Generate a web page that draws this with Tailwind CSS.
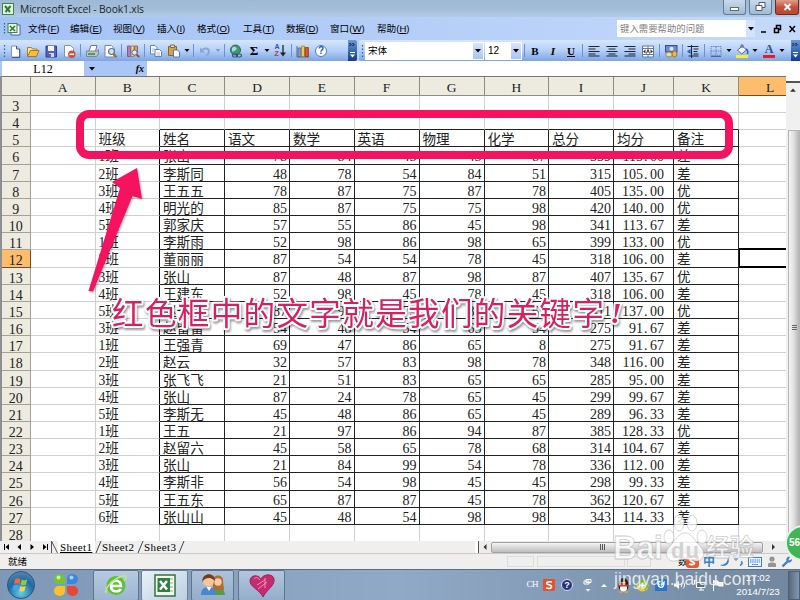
<!DOCTYPE html>
<html lang="zh-CN">
<head>
  <meta charset="UTF-8">
  <meta name="viewport" content="width=device-width, initial-scale=1.0">
  <title>Microsoft Excel - Book1.xls</title>
  <script src="https://cdn.jsdelivr.net/npm/@tailwindcss/browser@4"></script>
</head>
<body class="bg-white">
<div class="relative w-[800px] h-[600px] overflow-hidden flex flex-col font-['Liberation_Sans','Noto_Sans_CJK_SC',sans-serif] text-black">

  <!-- Title bar -->
  <header class="h-[17px] shrink-0 flex items-center pl-[2px] bg-linear-to-b from-[#9db9d3] via-[#a3bdd7] to-[#b3cbe6]">
    <svg class="w-[12px] h-[12px]" viewBox="0 0 12 12"><rect x=".5" y=".5" width="11" height="11" fill="#e6f3e0" stroke="#3e8348"/><path d="M3 3l5 6M8.500 3L3.500 9" stroke="#2c7a37" stroke-width="2"/></svg>
    <h1 class="ml-[6px] text-[10.3px] leading-[16px] text-[#1a2430] font-['Open_Sans',sans-serif] tracking-[-0.12px]">Microsoft Excel - Book1.xls</h1>
    <div class="ml-auto mr-px flex gap-[3px] h-[15px] self-start">
      <div class="w-[23px] border border-t-0 border-[#5f7c99] rounded-b-[3px] bg-linear-to-b from-[#c9d9ea] to-[#a2bad3] flex items-center justify-center pt-[3px]"><div class="w-[9px] h-[4px] bg-white border border-[#5d6b7c]"></div></div>
      <div class="w-[23px] border border-t-0 border-[#5f7c99] rounded-b-[3px] bg-linear-to-b from-[#c9d9ea] to-[#a2bad3] flex items-center justify-center">
        <svg class="w-[11px] h-[10px]" viewBox="0 0 11 10" fill="#fff" stroke="#4c5a6c"><path d="M4 .5h6v5H4z"/><path d="M1 3.500h6v5H1z"/></svg>
      </div>
      <div class="w-[24px] border border-t-0 border-[#6d2a23] rounded-b-[3px] bg-linear-to-b from-[#df9c8f] via-[#c7503c] to-[#bd4631] flex items-center justify-center">
        <svg class="w-[9px] h-[8px]" viewBox="0 0 9 8"><path d="M1.500 1l6 6M7.500 1l-6 6" stroke="#fff" stroke-width="2"/></svg>
      </div>
    </div>
  </header>

  <!-- Menu bar -->
  <nav class="h-[23px] shrink-0 flex items-center bg-linear-to-r from-[#a3c2f5] to-[#c5dafa] text-[9.6px] leading-[20px] whitespace-nowrap">
    <svg class="w-[20px] h-[14px] ml-[2px]" viewBox="0 0 20 14"><path d="M2.500 1v12" stroke="#365a9c" stroke-width="1.200" stroke-dasharray="1.500 1.500"/><path d="M9 3h9v10H9z" fill="#fff" stroke="#3667a8"/><rect x="6" y="1.500" width="9" height="9" fill="#e3f2df" stroke="#3e8348"/><path d="M8 4l5 5M13 4L8 9" stroke="#2c7a37" stroke-width="1.500"/></svg>
    <div class="ml-[6px] w-[42px]">文件(<u>F</u>)</div>
    <div class="w-[43px]">编辑(<u>E</u>)</div>
    <div class="w-[44px]">视图(<u>V</u>)</div>
    <div class="w-[40px]">插入(<u>I</u>)</div>
    <div class="w-[46px]">格式(<u>O</u>)</div>
    <div class="w-[43px]">工具(<u>T</u>)</div>
    <div class="w-[44px]">数据(<u>D</u>)</div>
    <div class="w-[47px]">窗口(<u>W</u>)</div>
    <div class="w-[40px]">帮助(<u>H</u>)</div>
    <div class="ml-auto w-[138px] h-[17px] bg-white flex items-center text-[#808080] text-[9.4px]">
      <span class="pl-[3px]">键入需要帮助的问题</span>
      <div class="ml-auto w-[9px] h-[17px] bg-[#d3e3fb] flex items-center justify-center"><svg class="w-[6px] h-[4px]" viewBox="0 0 6 4"><path d="M0 0h6L3 3.500z"/></svg></div>
    </div>
    <svg class="w-[45px] h-[12px]" viewBox="0 0 45 12" fill="none" stroke="#000" stroke-width="1.500"><path d="M6 9h5M19.500 5.500h4v4h-4zM21.500 5V2.500h4v4H24M34.500 3l5.500 6M40 3l-5.500 6"/></svg>
  </nav>

  <!-- Toolbars -->
  <div class="h-[21px] shrink-0 flex bg-[#b8d0f7]">
    <div class="w-[357px] h-[21px] flex items-center pl-[2px] bg-linear-to-b from-[#d6e6fe] via-[#b4cff8] to-[#7ea5e2] rounded-r-[2px]">
      <svg class="w-[4px] h-[14px] shrink-0" viewBox="0 0 4 14"><path d="M2.500 1v12" stroke="#365a9c" stroke-width="1.200" stroke-dasharray="1.500 2"/></svg>
      <!-- new -->
      <svg class="w-[18px] h-[18px] shrink-0" viewBox="0 0 18 18"><path d="M5.500 4h5l3 3v8h-8z" fill="#fff" stroke="#8494b4"/><path d="M10.500 4v3h3M13.800 7v8.500H6" fill="none" stroke="#3d5588"/></svg>
      <!-- open -->
      <svg class="w-[18px] h-[18px] shrink-0" viewBox="0 0 18 18"><path d="M3.500 14V5.500h4l1 1.500H13v3" fill="#fbe28d" stroke="#ab8124"/><path d="M3.500 14.500l3-6H15l-2.500 6z" fill="#f4bd43" stroke="#a8791e"/></svg>
      <!-- save -->
      <svg class="w-[18px] h-[18px] shrink-0" viewBox="0 0 18 18"><path d="M4 4h10.500v11H4z" fill="#5661ba" stroke="#353c8c"/><path d="M6 4h6v5H6z" fill="#f3f5ff"/><path d="M7 11h5v4H7z" fill="#cfd3ec"/><path d="M8 12v3" stroke="#353c8c" stroke-width="1.500"/></svg>
      <!-- permission -->
      <svg class="w-[18px] h-[18px] shrink-0" viewBox="0 0 18 18"><path d="M4.500 3.500h6l3 3v8.500h-9z" fill="#fff" stroke="#8492ad"/><circle cx="11.800" cy="12.300" r="3.700" fill="#d44c31"/><path d="M9.500 12.300h4.600" stroke="#fff" stroke-width="1.600"/></svg>
      <div class="w-[5px] h-[13px] shrink-0 flex justify-center"><div class="w-px bg-[#6b92cf]"></div></div>
      <!-- print -->
      <svg class="w-[18px] h-[18px] shrink-0" viewBox="0 0 18 18"><path d="M6 9l2-5.500h6L12.500 9" fill="#fff" stroke="#69768b"/><path d="M3.500 9h11l1-1.500V12l-2 2.500h-10z" fill="#b9c2cb" stroke="#7b8794"/><path d="M5 12h7" stroke="#4f9d57" stroke-width="2"/></svg>
      <!-- preview -->
      <svg class="w-[18px] h-[18px] shrink-0" viewBox="0 0 18 18"><path d="M4 3.500h6.500l2.500 3v8.500H4z" fill="#fff" stroke="#7586a5"/><circle cx="10.500" cy="9.500" r="3" fill="#cfe3f8" stroke="#626e80" stroke-width="1.200"/><path d="M12.500 12l3 3.200" stroke="#a46834" stroke-width="2"/></svg>
      <div class="w-[5px] h-[13px] shrink-0 flex justify-center"><div class="w-px bg-[#6b92cf]"></div></div>
      <!-- research -->
      <svg class="w-[18px] h-[18px] shrink-0" viewBox="0 0 18 18"><path d="M3.500 4h3v10.500h-3z" fill="#a97fbb" stroke="#7d5c91"/><path d="M7 4h3v10.500H7z" fill="#e9d79b" stroke="#9c8b5a"/><path d="M10.500 4h3v7h-3z" fill="#d99a7c" stroke="#986650"/><circle cx="10.500" cy="10.500" r="2.600" fill="#dbeafb" stroke="#626e80"/><path d="M12.500 12.500l2.700 2.700" stroke="#8a5630" stroke-width="1.800"/></svg>
      <div class="w-[5px] h-[13px] shrink-0 flex justify-center"><div class="w-px bg-[#6b92cf]"></div></div>
      <!-- copy -->
      <svg class="w-[18px] h-[18px] shrink-0" viewBox="0 0 18 18" fill="#fff" stroke="#5f82bd"><path d="M3.500 3.500h4.500l2 2v6.500H3.500z"/><path d="M8 7.500h4.500l2 2v5H8z"/><path d="M5 7h3M5 9h2M9.500 11h3.500M9.500 13h3.500" stroke="#84a5d8" stroke-width=".8"/></svg>
      <!-- paste -->
      <svg class="w-[18px] h-[18px] shrink-0" viewBox="0 0 18 18"><path d="M3.500 4.500h8v9h-8z" fill="#d9a24a" stroke="#8d6224"/><path d="M5.500 3h4v2.500h-4z" fill="#e8e0c2" stroke="#7c6c44"/><path d="M8.500 8h4l2 2v5h-6z" fill="#fff" stroke="#5475ad"/></svg>
      <svg class="w-[8px] h-[4px] shrink-0" viewBox="0 0 8 4"><path d="M1.500 0h5L4 3z"/></svg>
      <div class="w-[5px] h-[13px] shrink-0 flex justify-center"><div class="w-px bg-[#6b92cf]"></div></div>
      <!-- undo -->
      <svg class="w-[18px] h-[18px] shrink-0" viewBox="0 0 18 18"><path d="M5 9c3-4 8-3 8 .5 0 2-1 3-2.500 4.500" fill="none" stroke="#8aa6d6" stroke-width="2"/><path d="M4 5.500v5h5z" fill="#8aa6d6"/></svg>
      <svg class="w-[8px] h-[4px] shrink-0" viewBox="0 0 8 4"><path d="M1.500 0h5L4 3z" fill="#7f9bcb"/></svg>
      <div class="w-[5px] h-[13px] shrink-0 flex justify-center"><div class="w-px bg-[#6b92cf]"></div></div>
      <!-- hyperlink -->
      <svg class="w-[18px] h-[18px] shrink-0" viewBox="0 0 18 18"><circle cx="8.500" cy="8" r="5" fill="#3f9a66" stroke="#2a6b55"/><path d="M5 6c2-2 3-1 4-.5s1 2-1 3-2 2-3 .5z" fill="#a6d8f2"/><rect x="5.500" y="12" width="5" height="3" rx="1.500" fill="none" stroke="#35507f" stroke-width="1.200"/><rect x="9.500" y="12" width="5" height="3" rx="1.500" fill="none" stroke="#35507f" stroke-width="1.200"/></svg>
      <div class="w-[18px] shrink-0 text-center text-[13px] leading-[16px] font-bold font-['Liberation_Serif',serif]">Σ</div>
      <svg class="w-[8px] h-[4px] shrink-0" viewBox="0 0 8 4"><path d="M1.500 0h5L4 3z"/></svg>
      <!-- sort -->
      <div class="w-[18px] shrink-0 flex items-center justify-center">
        <div class="text-[7px] leading-[6.500px] font-bold"><div class="text-[#2c51b6]">A</div><div class="text-[#b33a40]">Z</div></div>
        <svg class="w-[6px] h-[13px]" viewBox="0 0 6 13"><path d="M3 1v8" stroke="#222" stroke-width="1.300"/><path d="M0 8.500h6L3 12.500z" fill="#222"/></svg>
      </div>
      <div class="w-[5px] h-[13px] shrink-0 flex justify-center"><div class="w-px bg-[#6b92cf]"></div></div>
      <!-- chart -->
      <svg class="w-[18px] h-[18px] shrink-0" viewBox="0 0 18 18"><path d="M3 4v11h12" fill="none" stroke="#5a6b86"/><path d="M4 6h3v8.500H4z" fill="#7c9fcf" stroke="#466394" stroke-width=".7"/><path d="M7.500 4h3v10.500h-3z" fill="#f1c84f" stroke="#a27b21" stroke-width=".7"/><path d="M11 5.500h3.500v9H11z" fill="#d4582f" stroke="#8a331a" stroke-width=".7"/></svg>
      <!-- help -->
      <div class="w-[18px] shrink-0 flex justify-center"><div class="size-[12px] rounded-full bg-white border border-[#4b78c4] text-[#2458bb] text-[10px] leading-[10.500px] font-bold text-center">?</div></div>
      <div class="ml-auto w-[9px] h-[21px] shrink-0 rounded-r-[2px] bg-linear-to-b from-[#6b97dd] to-[#0f3c91] flex flex-col items-center justify-between py-[3px]">
        <svg class="w-[7px] h-[4px]" viewBox="0 0 7 4"><path d="M.5 0l1.500 1.500L.5 3M3.500 0L5 1.500 3.500 3" stroke="#000" fill="none"/></svg>
        <svg class="w-[7px] h-[6px]" viewBox="0 0 7 6"><path d="M1 .5h5" stroke="#fff"/><path d="M1 2.500h5L3.500 5.500z" fill="#fff"/></svg>
      </div>
    </div>

    <div class="w-[441px] ml-[2px] h-[21px] flex items-center pl-[1px] bg-linear-to-b from-[#d6e6fe] via-[#b4cff8] to-[#7ea5e2] rounded-l-[2px]">
      <svg class="w-[5px] h-[14px] shrink-0" viewBox="0 0 5 14"><path d="M2.500 1v12" stroke="#365a9c" stroke-width="1.200" stroke-dasharray="1.500 2"/></svg>
      <div class="w-[119px] h-[18px] shrink-0 bg-white flex items-center text-[9.600px] pl-[3px] leading-[16px]">宋体<div class="ml-auto w-[10px] h-[16px] mr-px bg-linear-to-b from-[#d5e5fd] to-[#a6c5f3] flex items-center justify-center"><svg class="w-[6px] h-[4px]" viewBox="0 0 6 4"><path d="M0 0h6L3 3.500z"/></svg></div></div>
      <div class="w-[37px] h-[18px] ml-[1px] shrink-0 bg-white flex items-center text-[10px] pl-[3px] leading-[16px]">12<div class="ml-auto w-[10px] h-[16px] mr-px bg-linear-to-b from-[#d5e5fd] to-[#a6c5f3] flex items-center justify-center"><svg class="w-[6px] h-[4px]" viewBox="0 0 6 4"><path d="M0 0h6L3 3.500z"/></svg></div></div>
      <div class="w-[4px] h-[13px] shrink-0 flex justify-center"><div class="w-px bg-[#6b92cf]"></div></div>
      <div class="w-[18px] shrink-0 text-center text-[11px] leading-[16px] font-bold font-['Liberation_Serif',serif]">B</div>
      <div class="w-[18px] shrink-0 text-center text-[11px] leading-[16px] font-bold italic font-['Liberation_Serif',serif]">I</div>
      <div class="w-[18px] shrink-0 text-center text-[11px] leading-[16px] font-bold underline font-['Liberation_Serif',serif]">U</div>
      <div class="w-[5px] h-[13px] shrink-0 flex justify-center"><div class="w-px bg-[#6b92cf]"></div></div>
      <svg class="w-[18px] h-[18px] shrink-0" viewBox="0 0 18 18" stroke="#1c2634" stroke-width="1.200"><path d="M3.500 4.500h11M3.500 7h7M3.500 9.500h11M3.500 12h7M3.500 14h11"/></svg>
      <svg class="w-[18px] h-[18px] shrink-0" viewBox="0 0 18 18" stroke="#1c2634" stroke-width="1.200"><path d="M3.500 4.500h11M5.500 7h7M3.500 9.500h11M5.500 12h7M3.500 14h11"/></svg>
      <svg class="w-[18px] h-[18px] shrink-0" viewBox="0 0 18 18" stroke="#1c2634" stroke-width="1.200"><path d="M3.500 4.500h11M7.500 7h7M3.500 9.500h11M7.500 12h7M3.500 14h11"/></svg>
      <svg class="w-[18px] h-[18px] shrink-0" viewBox="0 0 18 18"><path d="M3.500 4h11v11h-11zM3.500 6.500h11M3.500 12.500h11M9 4v2.500M9 12.500V15" fill="#fff" stroke="#64789b"/><path d="M4 9.500l2.500-2v4zM14 9.500l-2.500-2v4z" fill="#333"/><path d="M7.500 11.500L9 7.500l1.500 4" fill="none" stroke="#333"/></svg>
      <div class="w-[5px] h-[13px] shrink-0 flex justify-center"><div class="w-px bg-[#6b92cf]"></div></div>
      <svg class="w-[18px] h-[18px] shrink-0" viewBox="0 0 18 18"><rect x="3.500" y="3.500" width="11.500" height="6.500" fill="#6d8fd1" stroke="#324f8e"/><circle cx="9.500" cy="6.700" r="2" fill="#dbe7fb"/><ellipse cx="7" cy="12.500" rx="3.300" ry="2.500" fill="#e3dba5" stroke="#867a3b" stroke-width=".8"/><ellipse cx="12.500" cy="12" rx="2.500" ry="3" fill="#eeb541" stroke="#93671b" stroke-width=".8"/></svg>
      <div class="w-[4px] h-[13px] shrink-0 flex justify-center"><div class="w-px bg-[#6b92cf]"></div></div>
      <svg class="w-[18px] h-[18px] shrink-0" viewBox="0 0 18 18" stroke="#1c2634" stroke-width="1.100"><path d="M3.500 4.500h11M9.500 7h5M9.500 9.500h4M9.500 12h5M4.500 14h10M7.500 3v13"/><path d="M3 9.500l3.500-2.500v5z" fill="#2c57b4" stroke="none"/></svg>
      <div class="w-[5px] h-[13px] shrink-0 flex justify-center"><div class="w-px bg-[#6b92cf]"></div></div>
      <svg class="w-[18px] h-[18px] shrink-0" viewBox="0 0 18 18" fill="none" stroke="#6c88b8"><path d="M4 4.500h10v9H4zM9 4.500v9M4 9h10" stroke-dasharray="1.500 .7"/><path d="M4 14.500h10" stroke="#4b6597"/></svg>
      <svg class="w-[8px] h-[4px] shrink-0" viewBox="0 0 8 4"><path d="M1.500 0h5L4 3z"/></svg>
      <svg class="w-[18px] h-[18px] shrink-0" viewBox="0 0 18 18"><path d="M4.500 8l5-4 4 4-5 4z" fill="#eef3fb" stroke="#5a6780"/><path d="M8 6V3h2v3" fill="none" stroke="#5a6780"/><path d="M13 7c2 1 2 3 1.500 5" stroke="#2f62b7" stroke-width="1.600" fill="none"/><path d="M3 13h12v3H3z" fill="#f6ee35"/></svg>
      <svg class="w-[8px] h-[4px] shrink-0" viewBox="0 0 8 4"><path d="M1.500 0h5L4 3z"/></svg>
      <div class="w-[18px] h-[14px] ml-px shrink-0 flex flex-col items-center"><div class="text-[12px] leading-[11px] font-bold text-[#2f4b8e] font-['Liberation_Serif',serif]">A</div><div class="w-[12px] h-[3px] bg-[#d8232e]"></div></div>
      <svg class="w-[8px] h-[4px] shrink-0" viewBox="0 0 8 4"><path d="M1.500 0h5L4 3z"/></svg>
      <div class="ml-auto w-[9px] h-[21px] shrink-0 bg-linear-to-b from-[#6b97dd] to-[#0f3c91] flex flex-col items-center justify-between py-[3px]">
        <svg class="w-[7px] h-[4px]" viewBox="0 0 7 4"><path d="M.5 0l1.500 1.500L.5 3M3.500 0L5 1.500 3.500 3" stroke="#000" fill="none"/></svg>
        <svg class="w-[7px] h-[6px]" viewBox="0 0 7 6"><path d="M1 .5h5" stroke="#fff"/><path d="M1 2.500h5L3.500 5.500z" fill="#fff"/></svg>
      </div>
    </div>
  </div>

  <!-- Formula bar -->
  <div class="h-[15px] shrink-0 flex bg-[#a9c6f6] pl-[2px] font-['Liberation_Serif',serif]">
    <div class="w-[82px] bg-white text-center text-[12px] leading-[17px]">L12</div>
    <div class="w-[63px] flex items-center justify-between pl-[5px] pr-[3px]">
      <svg class="w-[6px] h-[4px]" viewBox="0 0 6 4"><path d="M0 0h6L3 3.500z"/></svg>
      <span class="italic font-bold text-[10px] leading-[14px]">fx</span>
    </div>
    <div class="flex-1 bg-white"></div>
  </div>

  <!-- Worksheet -->
  <main class="h-[465px] shrink-0 flex overflow-hidden">
    <div class="w-[2px] shrink-0 bg-[#8f8f8f]"></div>
    <div id="sheet" class="w-[784px] shrink-0 overflow-hidden border-t border-[#77776f]"></div>
    <div class="w-[14px] shrink-0 flex flex-col items-center bg-[#f0f0f0]">
      <div class="w-full h-[7px] border-b-2 border-[#555] bg-white"></div>
      <svg class="w-[8px] h-[5px] mt-[5px]" viewBox="0 0 8 5"><path d="M1 4h6L4 .5z" fill="#333"/></svg>
      <div class="w-[12px] h-[420px] mt-[37px] ml-[2px] border border-[#b5b5b5] bg-linear-to-r from-[#f5f5f5] via-[#dedede] to-[#b5b5b5] flex flex-col items-center gap-px pt-[194px]">
        <div class="w-[5px] h-px bg-[#666]"></div><div class="w-[5px] h-px bg-[#666]"></div><div class="w-[5px] h-px bg-[#666]"></div>
      </div>
    </div>
  </main>

  <!-- Sheet tabs -->
  <div class="h-[13px] shrink-0 flex items-center bg-[#efefef] border-b border-[#c9c9c9] font-['Liberation_Serif',serif] text-[11px] leading-[12px]">
    <svg class="w-[50px] h-[12px] shrink-0" viewBox="0 0 50 12"><path d="M4.500 3v6" stroke="#000"/><path d="M9 3v6L5.500 6zM21 3v6l-3.500-3zM30.500 3v6l3.500-3zM43 3v6l3.500-3z"/><path d="M47.500 3v6" stroke="#000"/></svg>
    <svg class="w-[8px] h-[12px] shrink-0" viewBox="0 0 8 12"><path d="M1.500 0v12M1.500 0L7.500 12" stroke="#555" fill="none"/></svg>
    <b class="w-[37px] h-[12px] bg-white pl-[2px] underline font-normal tracking-[0.4px]">Sheet1</b>
    <svg class="w-[7px] h-[12px] shrink-0" viewBox="0 0 7 12"><path d="M1 12L6 0" stroke="#444"/></svg>
    <span class="w-[35px] tracking-[0.4px]">Sheet2</span>
    <svg class="w-[7px] h-[12px] shrink-0" viewBox="0 0 7 12"><path d="M1 12L6 0" stroke="#444"/></svg>
    <span class="w-[34px] tracking-[0.4px]">Sheet3</span>
    <svg class="w-[7px] h-[12px] shrink-0" viewBox="0 0 7 12"><path d="M1 12L6 0" stroke="#444"/></svg>
    <div class="ml-auto w-[325px] h-[12px] flex items-center bg-[#ececec]">
      <div class="w-[4px] h-[12px] border-r border-[#555] bg-white"></div>
      <svg class="w-[12px] h-[8px]" viewBox="0 0 12 8"><path d="M7.500 1v6L4.500 4z" fill="#333"/></svg>
      <div class="w-[272px] h-[11px] border border-[#a2a2a2] rounded-[2px] bg-linear-to-b from-[#f4f4f4] to-[#bebebe] flex items-center pl-[108px] gap-px">
        <div class="w-px h-[6px] bg-[#555]"></div><div class="w-px h-[6px] bg-[#555]"></div><div class="w-px h-[6px] bg-[#555]"></div>
      </div>
      <svg class="w-[10px] h-[8px] ml-[5px]" viewBox="0 0 10 8"><path d="M4 1v6l3-3z" fill="#333"/></svg>
    </div>
  </div>

  <!-- Status bar -->
  <div class="h-[15px] shrink-0 flex items-center bg-[#f0efee] text-[9.500px] leading-[14px]">
    <span class="pl-[8px] w-[507px]">就绪</span>
    <div class="w-[27px] h-[11px] border border-[#dcdcdc]"></div>
    <div class="w-[88px] h-[11px] ml-[3px] border border-[#dcdcdc]"></div>
    <div class="w-[24px] h-[11px] ml-[2px] border border-[#dcdcdc]"></div>
    <span class="ml-[27px] w-[8px] whitespace-nowrap">数</span>
    <!-- input method bar -->
    <div class="flex items-center gap-[4px] text-[#3c7fc5]">
      <svg class="w-[13px] h-[13px]" viewBox="0 0 13 13"><rect width="13" height="13" rx="3" fill="#e45a32"/><path d="M10 3.500C5 2 3 4 4.500 5.500S9 7 8.500 8.500 4 9.500 3 9" fill="none" stroke="#fff" stroke-width="1.800"/></svg>
      <span class="text-[12px] font-bold">中</span>
      <svg class="w-[11px] h-[11px]" viewBox="0 0 11 11"><path d="M9 1c3 7-3 11-8 8 5 0 8-3 8-8z" fill="#3c7fc5"/></svg>
      <svg class="w-[10px] h-[11px]" viewBox="0 0 10 11"><circle cx="2" cy="3" r="1.200" fill="none" stroke="#3c7fc5"/><path d="M7 5.500c2 1 1 3-1 4" stroke="#3c7fc5" stroke-width="1.600" fill="none"/></svg>
      <svg class="w-[14px] h-[10px]" viewBox="0 0 14 10"><rect x=".5" y=".5" width="13" height="9" fill="#eaf4ff" stroke="#3c7fc5"/><path d="M2 3h10M2 5h10M4 7.500h6" stroke="#3c7fc5" stroke-width="1.200" stroke-dasharray="1.500 .7"/></svg>
      <svg class="w-[10px] h-[12px] ml-px" viewBox="0 0 10 12" fill="#959595"><circle cx="5" cy="3" r="2.600"/><path d="M1 11V8c0-2 8-2 8 0v3z"/></svg>
      <svg class="w-[12px] h-[12px]" viewBox="0 0 12 12"><path d="M1.500 10.500l5-5" stroke="#3c7fc5" stroke-width="2.400"/><path d="M11 3L8.500 4.500 7.500 3.500 9 1C6 0 4.500 3 6 5.500S11.500 6 11 3z" fill="#3c7fc5"/></svg>
    </div>
  </div>

  <!-- Taskbar -->
  <footer class="h-[31px] shrink-0 flex items-center border-t border-[#5b6e84] bg-linear-to-r from-[#7f98b6] via-[#90a9c6] to-[#71879f]">
    <svg class="w-[28px] h-[28px] ml-[7px] shrink-0" viewBox="0 0 28 28"><defs><radialGradient id="orb" cx=".5" cy=".8" r=".8"><stop offset="0" stop-color="#5fd0ee"/><stop offset=".6" stop-color="#1e6aa5"/><stop offset="1" stop-color="#5c87ad"/></radialGradient></defs><circle cx="14" cy="14" r="13.500" fill="url(#orb)" stroke="#2a577f"/><path d="M8 8c2-1 3-1 5.500 0L12.500 13c-2-1-3.500-1-5.500 0z" fill="#ef6a36"/><path d="M14.800 8.500c2 1 3 1 5.500 0L19 13.500c-2 1-3.500 1-5.500 0z" fill="#91c940"/><path d="M6.500 14.500c2-1 3.500-1 5.500 0l-1 5c-2-1-3.500-1-5.500 0z" fill="#48a2e3"/><path d="M13.200 15c2 1 3.500 1 5.500 0l-1.200 5c-2 1-3 1-5.300 0z" fill="#fbd042"/></svg>
    <svg class="w-[26px] h-[26px] ml-[18px] shrink-0" viewBox="0 0 26 26"><path d="M1 7c0-7 11-6 11 0v5H6C3 12 1 10 1 7z" fill="#72c535"/><path d="M14 7c0-7 11-6 11 0 0 3-2 5-5 5h-6z" fill="#3d86df"/><path d="M1 19c0-3 2-5 5-5h6v5c0 7-11 6-11 0z" fill="#f7c22c"/><path d="M14 14h6c3 0 5 2 5 5 0 7-11 6-11 0z" fill="#e5473b"/><circle cx="5.500" cy="5.500" r="2" fill="#d0f09a"/><circle cx="18.500" cy="5.500" r="2" fill="#a5d0fa"/></svg>
    <div class="w-[46px] h-[31px] ml-[14px] shrink-0 border border-[#60758d] bg-linear-to-b from-[#b7cae0] to-[#9db5d1] rounded-[2px] flex items-center justify-center">
      <svg class="w-[24px] h-[24px]" viewBox="0 0 24 24"><circle cx="12" cy="12.500" r="9.500" fill="#5fbf35"/><path d="M7 13h10c0-7-10-7-10 0s8 6 10 3" fill="none" stroke="#fff" stroke-width="2.600"/><path d="M2 20C0 14 14 2 22 3c1 2-1 4-2 5" fill="none" stroke="#b7e98c" stroke-width="1.600"/></svg>
    </div>
    <div class="w-[47px] h-[31px] ml-[2px] shrink-0 border border-[#6c8096] bg-linear-to-br from-[#eaf1f8] to-[#bccfe3] rounded-[2px] flex items-center justify-center">
      <svg class="w-[22px] h-[23px]" viewBox="0 0 22 23"><rect x="1" y="1" width="20" height="21" fill="#f4faf1" stroke="#317439" stroke-width="1.500"/><path d="M13 5h6M13 9h6M13 13h6M13 17h6" stroke="#7fb384"/><rect x="3.500" y="4" width="12.500" height="14" fill="#2c823c"/><path d="M6 7l7 8.500M13 7l-7 8.500" stroke="#fff" stroke-width="2.500"/></svg>
    </div>
    <div class="w-[43px] h-[31px] ml-[3px] shrink-0 border border-[#60758d] bg-linear-to-b from-[#adc2da] to-[#94adca] rounded-[2px] flex items-center justify-center">
      <svg class="w-[26px] h-[24px]" viewBox="0 0 26 24"><path d="M13 22c-1-8 3-8 5-8s6 0 7 8z" fill="#5b9b48"/><path d="M13 17V7c0-6 10-6 10 0 0 4 1 7 1 10z" fill="#b06c33"/><circle cx="18" cy="9" r="3.700" fill="#f5cda3"/><path d="M1 22c0-6 3-8 7.500-8S16 16 16 22z" fill="#4888cc"/><path d="M6.500 14l2.500 4 2.500-4z" fill="#fff"/><circle cx="8.500" cy="8" r="5.500" fill="#f4c79b"/><path d="M2.500 9C1 0 15-2 15 8c-2-2-4-3-6-3-3 0-5 1-6.500 4z" fill="#79371d"/></svg>
    </div>
    <div class="w-[47px] h-[31px] ml-[4px] shrink-0 border border-[#60758d] bg-linear-to-b from-[#b3c6dd] to-[#94adca] rounded-[2px] flex items-center justify-center">
      <svg class="w-[26px] h-[25px]" viewBox="0 0 26 25"><path d="M14 24C11 17 1 14 1 8c0-6 8-7 11-2 2-5 12-6 13 0 1 7-7 10-11 18z" fill="#c82a70" stroke="#9d2259"/><path d="M5 6c1-2 4-2 6 1M8 12l8-5M9 16l9-7M16 5v10" stroke="#f292bb" fill="none"/></svg>
    </div>

    <!-- tray -->
    <div class="ml-auto flex items-center text-white">
      <span class="w-[16px] mr-[5px] text-right text-[9px] tracking-tighter font-['Liberation_Serif',serif]">CH</span>
      <svg class="w-[12px] h-[12px]" viewBox="0 0 12 12"><rect width="12" height="12" rx="1" fill="#e2532d"/><path d="M9 3C4 2 3 4 4 5s5 1 4.500 3-3.500 1.500-5.500 1" fill="none" stroke="#fff" stroke-width="1.600"/></svg>
      <div class="size-[12px] ml-[6px] rounded-full bg-[#27347e] border border-[#d8def0] text-[9px] leading-[10px] font-bold text-center">?</div>
      <svg class="w-[10px] h-[14px] ml-[10px]" viewBox="0 0 10 14"><path d="M3 1.500h5v3H3zM1 3h5v3H1z" fill="#7e93ac" stroke="#fff"/><path d="M2.500 11h5L5 13.500z" fill="#fff"/></svg>
      <svg class="w-[8px] h-[5px] ml-[7px]" viewBox="0 0 8 5"><path d="M1 4h6L4 1z" fill="#fff"/></svg>
      <svg class="w-[13px] h-[15px] ml-[9px]" viewBox="0 0 13 15"><ellipse cx="6.500" cy="7" rx="5" ry="7" fill="#1e1e22"/><ellipse cx="6.500" cy="10" rx="3.500" ry="3.800" fill="#fff"/><path d="M1.500 7.500h10" stroke="#dc2f28" stroke-width="2"/><ellipse cx="6.500" cy="4.700" rx="2.500" ry="1" fill="#f5a52a"/><path d="M2 14h3.500M7.500 14H11" stroke="#f5a52a" stroke-width="1.500"/></svg>
      <svg class="w-[13px] h-[13px] ml-[6px]" viewBox="0 0 13 13"><circle cx="6.500" cy="6.500" r="6" fill="#f1ce2c"/><path d="M1 5C2 1 8-1 11 3l1 5-3 3z" fill="#5fb637"/><path d="M6.500 3.500v6M3.500 6.500h6" stroke="#fff" stroke-width="2"/></svg>
      <svg class="w-[12px] h-[12px] ml-[6px]" viewBox="0 0 12 12"><rect width="12" height="12" fill="#2877cf"/><path d="M3 3.500c0 6 6 7 6 0L6 6.500M2.500 3l3-.5" fill="none" stroke="#fff" stroke-width="1.400"/></svg>
      <svg class="w-[13px] h-[12px] ml-[6px]" viewBox="0 0 13 12"><path d="M1 4.500h2L6 2v8L3 7.500H1z" fill="#fff"/><path d="M8 4c1 1 1 3 0 4M10 2.500c2 2 2 5 0 7" fill="none" stroke="#fff"/></svg>
      <svg class="w-[13px] h-[12px] ml-[7px]" viewBox="0 0 13 12"><path d="M3.500 3.500h8.500v5H3.500zM6 11h5M8 9v2" fill="#596d84" stroke="#fff"/><path d="M1.500 1v4M1 1.500h3" stroke="#fff"/></svg>
      <svg class="w-[12px] h-[12px] ml-[6px]" viewBox="0 0 12 12"><path d="M1.500 1v11" stroke="#fff"/><path d="M2 1.500h4l1 1.500h4.500v4.500H7L6 6.500H2z" fill="#fff"/></svg>
      <div class="w-[50px] ml-[9px] text-center text-[9.800px] leading-[14px]">17:02<br>2014/7/23</div>
      <div class="w-[12px] h-[29px] ml-[5px] border border-[#4d6077] bg-linear-to-r from-[#59697c] to-[#8398b0]"></div>
    </div>
  </footer>

  <!-- Annotations drawn over the window -->
  <div class="absolute left-[76px] top-[110px] w-[657px] h-[49px] border-8 border-[#f5135f] rounded-[13px]"></div>
  <svg class="absolute left-[80px] top-[160px] w-[70px] h-[140px] drop-shadow-[1px_1px_1px_rgba(0,0,0,0.3)]" viewBox="80 160 70 140"><path d="M137 168l5 31-9.500-3L93 291.500l-4.500-.5L120 188l-8-6z" fill="#f5135f"/></svg>
  <svg class="absolute left-[100px] top-[285px] w-[540px] h-[55px] drop-shadow-[1.5px_2px_1px_rgba(0,0,0,0.4)]" viewBox="0 0 540 55">
    <text x="12" y="40" textLength="492" class="text-[31.500px] font-['Noto_Sans_CJK_SC',sans-serif]" fill="#d8205e" stroke="#fff" stroke-width="4" stroke-linejoin="round" paint-order="stroke">红色框中的文字就是我们的关键字</text>
    <text x="510" y="38" class="text-[30px] italic font-bold font-['Liberation_Serif',serif]" fill="#d8205e" stroke="#fff" stroke-width="4" stroke-linejoin="round" paint-order="stroke">!</text>
  </svg>

  <!-- Watermark -->
  <svg class="absolute left-[605px] top-[508px] w-[160px] h-[84px]" viewBox="0 0 160 84">
    <g fill="#fff" fill-opacity=".8" stroke="#999" stroke-opacity=".5" stroke-width=".8">
      <text x="8" y="51" class="text-[33px] font-bold font-['Liberation_Sans',sans-serif]" textLength="50">Bai</text>
      <ellipse cx="64" cy="29" rx="5" ry="7"/><ellipse cx="74" cy="15" rx="5" ry="8"/><ellipse cx="87" cy="15" rx="5" ry="8"/><ellipse cx="97" cy="29" rx="5" ry="7"/>
      <path d="M80 25c7 0 9 7 15 13 7 7 3 16-5 15-7-2-13-2-20 0-8 1-12-8-5-15 6-6 8-13 15-13z"/>
      <text x="101" y="48" class="text-[24px] font-bold font-['Noto_Sans_CJK_SC',sans-serif]" textLength="48">经验</text>
    </g>
    <text x="9" y="77" class="text-[17.500px] font-['Liberation_Sans',sans-serif]" fill="#fff" fill-opacity=".9" stroke="#999" stroke-opacity=".4" stroke-width=".5" textLength="142">jingyan.baidu.com</text>
    <text x="66" y="50" class="text-[22px] font-bold font-['Liberation_Sans',sans-serif]" fill="#d2d2d2" textLength="28">du</text>
  </svg>

  <!-- Floating speed ball -->
  <div class="absolute left-[785px] top-[525px] size-[36px] rounded-full border-2 border-[#dff3df] bg-[#3fb556] text-white text-[10px] font-bold leading-[32px] pl-[2px]">56</div>
</div>

<script>
  const columns = ['A', 'B', 'C', 'D', 'E', 'F', 'G', 'H', 'I', 'J', 'K', 'L'];
  const rows = {
    5: ['班级', '姓名', '语文', '数学', '英语', '物理', '化学', '总分', '均分', '备注'],
    6: ['1班', '张山', 78, 84, 45, 45, 87, 339, '113.00', '差'],
    7: ['2班', '李斯同', 48, 78, 54, 84, 51, 315, '105.00', '差'],
    8: ['3班', '王五五', 78, 87, 75, 87, 78, 405, '135.00', '优'],
    9: ['4班', '明光的', 85, 87, 75, 75, 98, 420, '140.00', '优'],
    10: ['5班', '郭家庆', 57, 55, 86, 45, 98, 341, '113.67', '差'],
    11: ['1班', '李斯雨', 52, 98, 86, 98, 65, 399, '133.00', '优'],
    12: ['2班', '董丽丽', 87, 54, 54, 78, 45, 318, '106.00', '差'],
    13: ['3班', '张山', 87, 48, 87, 98, 87, 407, '135.67', '优'],
    14: ['4班', '王建东', 52, 98, 45, 78, 45, 318, '106.00', '差'],
    15: ['5班', '赵云', 87, 98, 75, 86, 65, 411, '137.00', '优'],
    16: ['3班', '赵留留', 54, 48, 54, 65, 54, 275, '91.67', '差'],
    17: ['1班', '王强青', 69, 47, 86, 65, 8, 275, '91.67', '差'],
    18: ['2班', '赵云', 32, 57, 83, 98, 78, 348, '116.00', '差'],
    19: ['3班', '张飞飞', 21, 51, 83, 65, 65, 285, '95.00', '差'],
    20: ['4班', '张山', 87, 24, 78, 65, 45, 299, '99.67', '差'],
    21: ['5班', '李斯无', 45, 48, 86, 65, 45, 289, '96.33', '差'],
    22: ['1班', '王五', 21, 97, 86, 94, 87, 385, '128.33', '优'],
    23: ['2班', '赵留六', 45, 58, 65, 78, 68, 314, '104.67', '差'],
    24: ['3班', '张山', 21, 84, 99, 54, 78, 336, '112.00', '差'],
    25: ['4班', '李斯非', 56, 54, 98, 45, 45, 298, '99.33', '差'],
    26: ['5班', '王五东', 65, 87, 87, 45, 78, 362, '120.67', '差'],
    27: ['6班', '张山山', 45, 48, 54, 98, 98, 343, '114.33', '差']
  };

  const grid = 'grid grid-rows-[100%] grid-cols-[28.5px_65px_64.5px_65px_65px_64.5px_65px_65px_64.5px_65px_60px_65px_48px]';

  // Header row
  let html = `<div class="${grid} h-[19px] text-[13.5px] leading-[21px] text-center text-[#222] font-['Liberation_Serif',serif]">
    <div class="bg-[#edeadf] border-r border-b border-[#8f8d80]"></div>`;
  columns.forEach(name => {
    html += name === 'L'
      ? '<div class="bg-[#fdbd6c] border-b border-[#7a4a1e] pl-[14px]">L</div>'
      : `<div class="bg-[#edeadf] border-r border-b border-[#8f8d80]">${name}</div>`;
  });
  html += '</div>';

  for (let r = 3; r <= 28; r++) {
    const data = rows[r] || [];
    html += `<div class="${grid} h-[17.17px] text-[14px] leading-[20px] text-[#222] whitespace-nowrap font-['Liberation_Serif','Noto_Sans_CJK_SC',serif]">`;
    html += r === 12
      ? '<div class="bg-[#fdbd6c] border-r border-b border-[#7a4a1e] text-center leading-[21px]">12</div>'
      : `<div class="bg-[#edeadf] border-r border-b border-[#a3a194] text-center leading-[21px]">${r}</div>`;

    columns.forEach((name, i) => {
      const value = data[i - 1] ?? '';
      const boxed = r >= 5 && r <= 27;
      let border = 'border-r border-b border-[#cfcfcf]';
      if (boxed && name === 'B') border = 'border-r border-b border-b-[#cfcfcf] border-r-black';
      if (boxed && i >= 2 && i <= 10) border = 'border-r border-b border-[#222]';
      if (r === 4 && i >= 2 && i <= 10) border = 'border-r border-b border-r-[#cfcfcf] border-b-[#222]';
      if (name === 'L' && r === 11) border = 'border-b-2 border-black';
      if (name === 'L' && r === 12) border = 'border-b-2 border-l border-black';

      let align = 'pl-[3px] text-[13.6px]';
      if (r > 5 && i >= 3 && i <= 8) align = 'pr-[2px] text-right';
      if (r > 5 && i === 9) align = 'pr-[9px] text-right';
      // the decimal point takes a full digit's width
      const text = i === 9 ? String(value).replace('.', '<span class="inline-block w-[7px] text-left pl-px">.</span>') : value;
      html += `<div class="${border} ${align}">${text}</div>`;
    });
    html += '</div>';
  }
  document.getElementById('sheet').innerHTML = html;
</script>
</body>
</html>
